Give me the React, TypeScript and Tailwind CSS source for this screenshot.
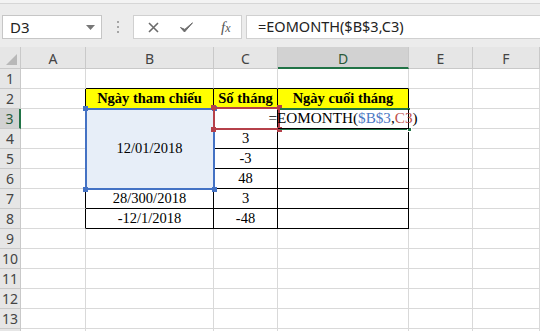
import clsx from "clsx";
import type { ReactNode } from "react";

const serif = "font-['Liberation_Serif',serif]";
const ui = "font-['Noto_Sans','Open_Sans',sans-serif]";

const columns = ["A", "B", "C", "D", "E", "F"];
const rows = Array.from({ length: 14 }, (_, i) => i + 1);

const colC: Record<number, string> = { 4: "3", 5: "-3", 6: "48", 7: "3", 8: "-48" };
const colB: Record<number, string> = { 7: "28/300/2018", 8: "-12/1/2018" };

function Cell({ className, children }: { className?: string; children?: ReactNode }) {
  return (
    <div
      className={clsx(
        "border-r border-b border-[#d9d9d9] flex items-center justify-center whitespace-nowrap text-[14.5px] text-black",
        serif,
        className
      )}
    >
      {children}
    </div>
  );
}

function FormulaBar() {
  return (
    <div className="h-[47px] bg-[#ececec] flex flex-col">
      <div className="h-[4px] border-b border-[#d6d6d6] bg-[#f3f3f3]" />
      <div className="mt-[11px] h-[24px] flex items-stretch">
        {/* name box */}
        <div className="ml-[2px] w-[100px] bg-white border border-[#c6c6c6] flex items-center justify-between pl-[7px] pr-[6px]">
          <span className={clsx("text-[15px] text-[#222]", ui)}>D3</span>
          <svg width="9" height="5" viewBox="0 0 9 5">
            <path d="M0 0 L9 0 L4.5 5 Z" fill="#777" />
          </svg>
        </div>
        <div className="w-[31px] flex flex-col items-center justify-center gap-[3px]">
          <span className="w-[2px] h-[2px] bg-[#a5a5a5]" />
          <span className="w-[2px] h-[2px] bg-[#a5a5a5]" />
          <span className="w-[2px] h-[2px] bg-[#a5a5a5]" />
        </div>
        {/* cancel / enter / fx */}
        <div className="w-[109px] bg-white border border-[#d0d0d0] flex items-center">
          <svg className="ml-[14px]" width="11" height="11" viewBox="0 0 11 11">
            <path d="M1 1 L10 10 M10 1 L1 10" stroke="#6b6b6b" strokeWidth="1.6" />
          </svg>
          <svg className="ml-[21px]" width="13" height="11" viewBox="0 0 13 11">
            <path d="M0.5 5.5 L4.5 10 L12.5 0.8 L4.8 7.4 Z" fill="#6b6b6b" stroke="#6b6b6b" strokeWidth="1" strokeLinejoin="round" />
          </svg>
          <span className={clsx("ml-[28px] italic text-[15px] text-[#555] leading-none", serif)}>
            f<span className="text-[12px]">x</span>
          </span>
        </div>
        {/* formula input */}
        <div className="ml-[4px] flex-1 bg-white border-y border-l border-[#d0d0d0] flex items-center pl-[11px]">
          <span className={clsx("text-[14.5px] text-[#222]", ui)}>=EOMONTH($B$3,C3)</span>
        </div>
      </div>
    </div>
  );
}

function Sheet() {
  const cells: ReactNode[] = [];

  // column headers
  cells.push(
    <div key="corner" className="border-r border-b border-[#c9c9c9] bg-[#e6e6e6] flex items-end justify-end p-[3px]">
      <svg width="11" height="11" viewBox="0 0 11 11">
        <path d="M11 0 L11 11 L0 11 Z" fill="#b8b8b8" />
      </svg>
    </div>
  );
  columns.forEach((c) =>
    cells.push(
      <div
        key={`h${c}`}
        className={clsx(
          "border-r border-b flex items-center justify-center pt-[2px] text-[14px]",
          ui,
          c === "D"
            ? "bg-[#d2d2d2] text-[#2a5a3a] border-b-2 border-b-[#217346] border-r-[#c9c9c9]"
            : "bg-[#e6e6e6] text-[#444] border-[#c9c9c9]"
        )}
      >
        {c}
      </div>
    )
  );

  rows.forEach((r) => {
    const inTable = r >= 2 && r <= 8;
    cells.push(
      <div
        key={`r${r}`}
        className={clsx(
          "border-b border-[#c9c9c9] flex items-center justify-center text-[14px]",
          ui,
          r === 3
            ? "bg-[#d2d2d2] text-[#2a5a3a] border-r-2 border-r-[#217346]"
            : "bg-[#e6e6e6] text-[#444] border-r"
        )}
      >
        {r < 14 ? r : null}
      </div>
    );
    // A
    cells.push(<Cell key={`A${r}`} className={clsx(inTable && "border-r-black")} />);
    // B
    if (r === 1) cells.push(<Cell key="B1" className="border-b-black" />);
    else if (r === 2)
      cells.push(
        <Cell key="B2" className="bg-[#ffff00] border-black font-bold">
          Ngày tham chiếu
        </Cell>
      );
    else if (r === 3)
      cells.push(
        <Cell key="B3" className="row-span-4 bg-[#e7eef8] border-black">
          12/01/2018
        </Cell>
      );
    else if (r >= 4 && r <= 6) {
      // merged into B3
    } else
      cells.push(
        <Cell key={`B${r}`} className={clsx(inTable && "border-black")}>
          {colB[r]}
        </Cell>
      );
    // C
    if (r === 1) cells.push(<Cell key="C1" className="border-b-black" />);
    else if (r === 2)
      cells.push(
        <Cell key="C2" className="bg-[#ffff00] border-black font-bold">
          Số tháng
        </Cell>
      );
    else
      cells.push(
        <Cell key={`C${r}`} className={clsx(inTable && "border-black")}>
          {colC[r]}
        </Cell>
      );
    // D
    if (r === 1) cells.push(<Cell key="D1" className="border-b-black" />);
    else if (r === 2)
      cells.push(
        <Cell key="D2" className="bg-[#ffff00] border-black font-bold">
          Ngày cuối tháng
        </Cell>
      );
    else if (r === 3)
      cells.push(
        <Cell key="D3" className="border-black relative z-10 text-[15.2px]">
          <span>
            =EOMONTH(<span className="text-[#4a78c4]">$B$3</span>,<span className="text-[#c0504d]">C3</span>)
          </span>
        </Cell>
      );
    else cells.push(<Cell key={`D${r}`} className={clsx(inTable && "border-black")} />);
    // E, F
    cells.push(<Cell key={`E${r}`} />);
    cells.push(<Cell key={`F${r}`} />);
  });

  return (
    <div className="relative grid grid-cols-[21px_65px_128px_64px_131px_64px_67px] grid-rows-[22px_repeat(14,20px)]">
      {cells}

      {/* B3:B6 reference highlight */}
      <div className="absolute left-[85px] top-[61px] w-[130px] h-[82px] border-2 border-[#4472c4] pointer-events-none">
        <span className="absolute -left-[4px] -top-[4px] w-[5px] h-[5px] bg-[#4472c4]" />
        <span className="absolute -right-[4px] -top-[4px] w-[5px] h-[5px] bg-[#4472c4]" />
        <span className="absolute -left-[4px] -bottom-[4px] w-[5px] h-[5px] bg-[#4472c4]" />
        <span className="absolute -right-[4px] -bottom-[4px] w-[5px] h-[5px] bg-[#4472c4]" />
      </div>

      {/* C3 reference highlight */}
      <div className="absolute left-[213px] top-[60px] w-[67px] h-[23px] border-2 border-[#b5404a] pointer-events-none">
        <span className="absolute -left-[4px] -top-[4px] w-[5px] h-[5px] bg-[#b5404a]" />
        <span className="absolute -right-[4px] -top-[4px] w-[5px] h-[5px] bg-[#b5404a]" />
        <span className="absolute -left-[4px] -bottom-[4px] w-[5px] h-[5px] bg-[#b5404a]" />
        <span className="absolute -right-[4px] -bottom-[4px] w-[5px] h-[5px] bg-[#b5404a]" />
      </div>

      {/* active cell D3 */}
      <div className="absolute left-[280px] top-[61px] w-[130px] h-[2px] bg-[#217346]" />
      <div className="absolute left-[280px] top-[81px] w-[130px] h-[2px] bg-[#217346]" />
      <div className="absolute left-[407px] top-[80px] w-[5px] h-[5px] bg-[#217346] border border-white" />
    </div>
  );
}

export default function App() {
  return (
    <div className="w-[540px] h-[331px] overflow-hidden bg-white">
      <FormulaBar />
      <Sheet />
    </div>
  );
}
